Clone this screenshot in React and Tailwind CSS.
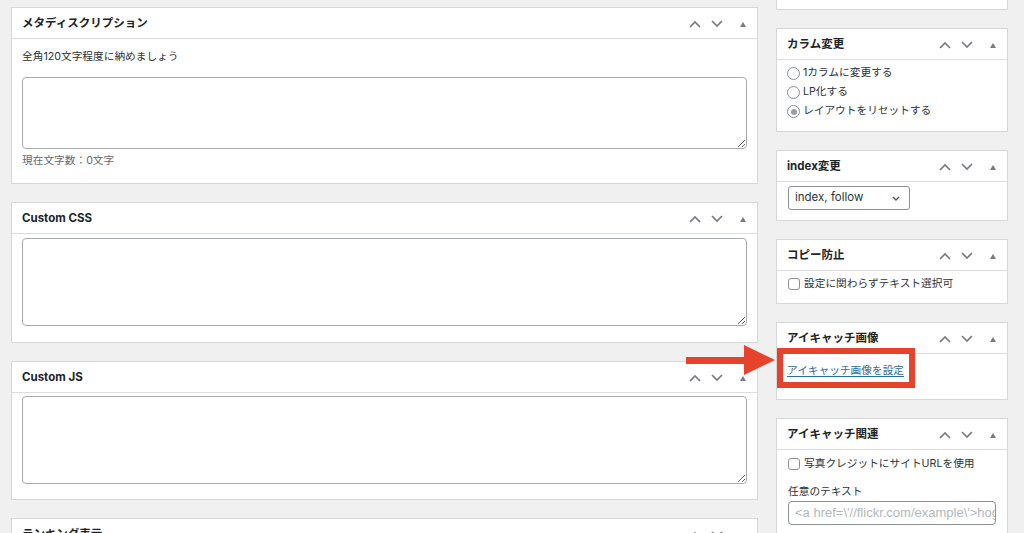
import React from "react";

const Up = () => (
  <svg width="12" height="8" viewBox="0 0 12 8" className="block">
    <polyline points="1,7 6,2 11,7" fill="none" stroke="#787c82" strokeWidth="1.7" />
  </svg>
);
const Down = () => (
  <svg width="12" height="8" viewBox="0 0 12 8" className="block">
    <polyline points="1,1 6,6 11,1" fill="none" stroke="#787c82" strokeWidth="1.7" />
  </svg>
);
const Tri = () => (
  <svg width="6" height="5" viewBox="0 0 6 5" className="block">
    <polygon points="0,5 3,0 6,5" fill="#787c82" />
  </svg>
);

function Box({ title, children }) {
  return (
    <div className="shrink-0 bg-white border border-[#d6d7d9]">
      <div className="h-[31px] pt-[2px] flex items-center justify-between pl-[10px] pr-[11px] border-b border-[#dcdcde]">
        <span className="font-bold text-[11.5px] text-[#1d2327]">{title}</span>
        <div className="flex items-center">
          <Up />
          <span className="w-[10px]" />
          <Down />
          <span className="w-[17px]" />
          <Tri />
        </div>
      </div>
      {children}
    </div>
  );
}

function TA({ h }) {
  return (
    <textarea
      className={"block w-full border border-[#a7aaad] rounded-[4px] bg-white " + h}
      style={{ resize: "vertical" }}
    />
  );
}

function Radio({ checked, label }) {
  return (
    <div className="flex items-center h-[19px]">
      <span className="w-[13px] h-[13px] rounded-full border border-[#8c8f94] bg-white flex items-center justify-center shrink-0">
        {checked && <span className="w-[6px] h-[6px] rounded-full bg-[#9a9da2]" />}
      </span>
      <span className="ml-[3px] text-[10.7px] text-[#2c3338]">{label}</span>
    </div>
  );
}

function Check({ label }) {
  return (
    <div className="flex items-center h-[18px]">
      <span className="w-[12px] h-[12px] rounded-[3px] border border-[#8c8f94] bg-white shrink-0" />
      <span className="ml-[4px] text-[10.7px] text-[#2c3338]">{label}</span>
    </div>
  );
}

export default function App() {
  return (
    <div className="relative w-[1024px] h-[533px] overflow-hidden bg-[#f0f0f1] flex items-start gap-[18px] pl-[11px] font-[Inter,'Noto_Sans_CJK_JP',sans-serif] text-[#1d2327]">
      <div className="w-[747px] shrink-0 pt-[7px] flex flex-col gap-[18px]">
        <Box title="メタディスクリプション">
          <div className="px-[10px] pt-[10px] pb-[14px]">
            <div className="text-[10.7px] leading-[16px] text-[#2c3338]">全角120文字程度に納めましょう</div>
            <div className="mt-[12px]">
              <TA h="h-[72px]" />
            </div>
            <div className="mt-[4px] text-[10.7px] leading-[16px] text-[#646970]">現在文字数：0文字</div>
          </div>
        </Box>
        <Box title="Custom CSS">
          <div className="px-[10px] pt-[4px] pb-[16px]">
            <TA h="h-[88px]" />
          </div>
        </Box>
        <Box title="Custom JS">
          <div className="px-[10px] pt-[3px] pb-[15px]">
            <TA h="h-[88px]" />
          </div>
        </Box>
        <Box title="ランキング表示">
          <div className="h-[40px]" />
        </Box>
      </div>

      <div className="w-[232px] shrink-0 flex flex-col gap-[18px]">
        <div className="shrink-0 h-[10px] bg-white border-x border-b border-[#d6d7d9]" />
        <Box title="カラム変更">
          <div className="px-[10px] pt-[4px] pb-[10px]">
            <Radio label="1カラムに変更する" />
            <Radio label="LP化する" />
            <Radio checked label="レイアウトをリセットする" />
          </div>
        </Box>
        <Box title="index変更">
          <div className="px-[11px] pt-[4px] pb-[10px]">
            <div className="w-[122px] h-[24px] border border-[#8c8f94] rounded-[3px] flex items-center justify-between pl-[6px] pr-[9px] bg-white">
              <span className="text-[11.5px] text-[#2c3338]">index, follow</span>
              <svg width="8" height="5" viewBox="0 0 8 5" className="block">
                <polyline points="1,1 4,4 7,1" fill="none" stroke="#50575e" strokeWidth="1.4" />
              </svg>
            </div>
          </div>
        </Box>
        <Box title="コピー防止">
          <div className="px-[11px] pt-[4px] pb-[10px]">
            <Check label="設定に関わらずテキスト選択可" />
          </div>
        </Box>
        <Box title="アイキャッチ画像">
          <div className="px-[10px] pt-[8px] pb-[19px]">
            <div className="h-[18px] flex items-center text-[10.7px]">
              <span className="text-[#31699a] underline underline-offset-2">アイキャッチ画像を設定</span>
            </div>
          </div>
        </Box>
        <Box title="アイキャッチ関連">
          <div className="px-[11px] pt-[5px] pb-[10px]">
            <Check label="写真クレジットにサイトURLを使用" />
            <div className="mt-[11px] text-[10.7px] leading-[16px] text-[#2c3338]">任意のテキスト</div>
            <div className="mt-[1px] h-[24px] border border-[#8c8f94] rounded-[4px] bg-white flex items-center pl-[6px] overflow-hidden whitespace-nowrap">
              <span className="text-[13px] text-[#b4b7ba] font-['Liberation_Sans',sans-serif]">{"<a href=\\'//flickr.com/example\\'>hoge</a>"}</span>
            </div>
          </div>
        </Box>
      </div>

      <div className="absolute left-[777px] top-[348px] w-[138px] h-[40px] border-[6px] border-[#e5432b]" />
      <svg className="absolute left-[686px] top-[344px]" width="90" height="32" viewBox="0 0 90 32">
        <rect x="0" y="13" width="62" height="7" fill="#e5432b" />
        <polygon points="58,1 89,16 58,31" fill="#e5432b" />
      </svg>
    </div>
  );
}
